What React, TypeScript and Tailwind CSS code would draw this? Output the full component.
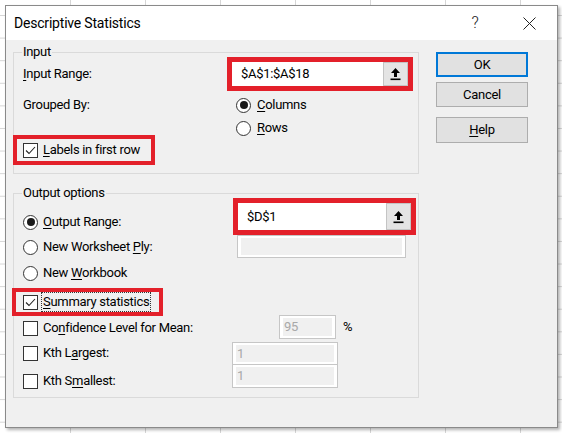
import React from "react";

const RED = "border-[#e3202a]";

function U({ children }: { children: React.ReactNode }) {
  return <span className="underline underline-offset-[2px] decoration-[1px]">{children}</span>;
}

function Radio({ checked }: { checked?: boolean }) {
  return (
    <span className="w-[15px] h-[15px] shrink-0 rounded-full border border-[#333] bg-white flex items-center justify-center">
      {checked && <span className="w-[8px] h-[8px] rounded-full bg-[#1a1a1a]" />}
    </span>
  );
}

function Check({ checked }: { checked?: boolean }) {
  return (
    <span className="w-[15px] h-[15px] shrink-0 border border-[#333] bg-white flex items-center justify-center">
      {checked && (
        <svg width="13" height="13" viewBox="0 0 13 13">
          <polyline points="2,6.5 5,9.5 11,3" fill="none" stroke="#222" strokeWidth="1.1" />
        </svg>
      )}
    </span>
  );
}

function PickIcon() {
  return (
    <svg width="11" height="14" viewBox="0 0 11 14">
      <polygon points="5.5,1 10,6 7,6 7,10 4,10 4,6 1,6" fill="#000" />
      <rect x="0.5" y="11.5" width="10" height="1.6" fill="#000" />
    </svg>
  );
}

function RangeField({ value }: { value: string }) {
  return (
    <div className="flex h-full bg-white">
      <span className="flex-1 flex items-center pl-[9px] text-black">{value}</span>
      <span className="w-[25px] h-full bg-[#e4e4e4] border border-[#c4c4c4] flex items-center justify-center">
        <PickIcon />
      </span>
    </div>
  );
}

function Disabled({ value, className }: { value?: string; className: string }) {
  return (
    <div className={`border border-[#c6c6c6] bg-white px-[3px] py-[2px] ${className}`}>
      <div className="h-full bg-[#f0f0f0] flex items-center pl-[1px] text-[#a8a8a8]">{value}</div>
    </div>
  );
}

function GroupBox({ title, className, children }: { title: string; className: string; children: React.ReactNode }) {
  return (
    <div className={`relative border border-[#dadada] ${className}`}>
      <span className="absolute left-[8px] top-[-10px] h-[18px] px-[1px] bg-[#f0f0f0] flex items-center text-black">
        {title}
      </span>
      {children}
    </div>
  );
}

function Button({ children, primary, className }: { children: React.ReactNode; primary?: boolean; className?: string }) {
  return (
    <div
      className={`w-[92px] flex items-center justify-center bg-[#e1e1e1] border text-black ${
        primary ? "border-[#0078d7] shadow-[inset_0_0_0_1px_#0078d7]" : "border-[#adadad]"
      } ${className ?? ""}`}
    >
      {children}
    </div>
  );
}

export default function App() {
  return (
    <div className="w-[562px] h-[433px] overflow-hidden bg-white bg-[linear-gradient(to_right,#d6d6d6_1px,transparent_1px),linear-gradient(to_bottom,#d6d6d6_1px,transparent_1px)] bg-[size:75px_22.6px] bg-[position:70px_15px] p-[5px] [font-family:Roboto,sans-serif] text-[13px] tracking-[-0.3px]">
      <div className="w-[553px] h-[423px] border border-[#8a8a8a] bg-[#f0f0f0] shadow-[2px_2px_3px_rgba(0,0,0,0.3)] flex flex-col">
        {/* title bar */}
        <div className="h-[34px] bg-white flex items-center pl-[8px]">
          <span className="text-[14px] tracking-[-0.2px] text-black">Descriptive Statistics</span>
          <div className="ml-auto flex items-center mr-[5px]">
            <span className="w-[46px] text-center text-[16px] font-light text-[#222]">?</span>
            <span className="w-[46px] ml-[8px] flex justify-center">
              <svg width="13" height="13" viewBox="0 0 13 13">
                <path d="M0.5 0.5 L12.5 12.5 M12.5 0.5 L0.5 12.5" stroke="#222" strokeWidth="1" />
              </svg>
            </span>
          </div>
        </div>

        <div className="flex pt-[12px] pl-[7px]">
          <div className="w-[406px]">
            <GroupBox title="Input" className="h-[122px]">
              <div className="mt-[4px] h-[34px] flex items-center">
                <span className="w-[213px] pl-[9px]">
                  <U>I</U>nput Range:
                </span>
                <div className={`w-[186px] h-[34px] border-[5px] ${RED}`}>
                  <RangeField value="$A$1:$A$18" />
                </div>
              </div>
              <div className="mt-[3px] h-[22px] flex items-center">
                <span className="w-[222px] pl-[9px]">Grouped By:</span>
                <Radio checked />
                <span className="ml-[6px]">
                  <U>C</U>olumns
                </span>
              </div>
              <div className="mt-[1px] h-[22px] flex items-center">
                <span className="w-[222px]" />
                <Radio />
                <span className="ml-[6px]">
                  <U>R</U>ows
                </span>
              </div>
              <div className={`-mt-[4px] -ml-[1px] w-[142px] h-[30px] border-[4px] ${RED} flex items-center pl-[6px]`}>
                <Check checked />
                <span className="ml-[5px]">
                  <U>L</U>abels in first row
                </span>
              </div>
            </GroupBox>

            <GroupBox title="Output options" className="mt-[19px] h-[205px]">
              <div className="flex">
                <div className="w-[218px] pt-[17px]">
                  <div className="h-[22px] flex items-center pl-[9px]">
                    <Radio checked />
                    <span className="ml-[5px]">
                      <U>O</U>utput Range:
                    </span>
                  </div>
                  <div className="mt-[3px] h-[22px] flex items-center pl-[9px]">
                    <Radio />
                    <span className="ml-[5px]">
                      New Worksheet <U>P</U>ly:
                    </span>
                  </div>
                  <div className="mt-[4px] h-[22px] flex items-center pl-[9px]">
                    <Radio />
                    <span className="ml-[5px]">
                      New <U>W</U>orkbook
                    </span>
                  </div>
                  <div className={`mt-[4px] -ml-[2px] w-[151px] h-[28px] border-[4px] ${RED} flex items-center pl-[7px]`}>
                    <Check checked />
                    <span className="ml-[3px] px-[1px] border border-dotted border-[#333] leading-[18px]">
                      <U>S</U>ummary statistics
                    </span>
                  </div>
                  <div className="mt-[1px] h-[22px] flex items-center pl-[9px]">
                    <Check />
                    <span className="ml-[5px] whitespace-nowrap">
                      Co<U>n</U>fidence Level for Mean:
                    </span>
                  </div>
                  <div className="mt-[3px] h-[22px] flex items-center pl-[9px]">
                    <Check />
                    <span className="ml-[5px]">
                      Kth L<U>a</U>rgest:
                    </span>
                  </div>
                  <div className="mt-[6px] h-[22px] flex items-center pl-[9px]">
                    <Check />
                    <span className="ml-[5px]">
                      Kth S<U>m</U>allest:
                    </span>
                  </div>
                </div>

                <div className="pt-[4px]">
                  <div className={`ml-[1px] w-[183px] h-[37px] border-[5px] ${RED}`}>
                    <RangeField value="$D$1" />
                  </div>
                  <Disabled className="ml-[5px] w-[169px] h-[23px]" />
                  <div className="mt-[57px] flex items-center">
                    <Disabled value="95" className="ml-[47px] w-[57px] h-[24px]" />
                    <span className="ml-[7px]">%</span>
                  </div>
                  <Disabled value="1" className="mt-[3px] w-[106px] h-[23px]" />
                  <Disabled value="1" className="-mt-[1px] w-[106px] h-[24px]" />
                </div>
              </div>
            </GroupBox>
          </div>

          <div className="ml-[17px] flex flex-col">
            <Button primary className="h-[25px]">OK</Button>
            <Button className="mt-[5px] h-[25px]">Cancel</Button>
            <Button className="mt-[10px] h-[26px]">
              <span>
                <U>H</U>elp
              </span>
            </Button>
          </div>
        </div>
      </div>
    </div>
  );
}
